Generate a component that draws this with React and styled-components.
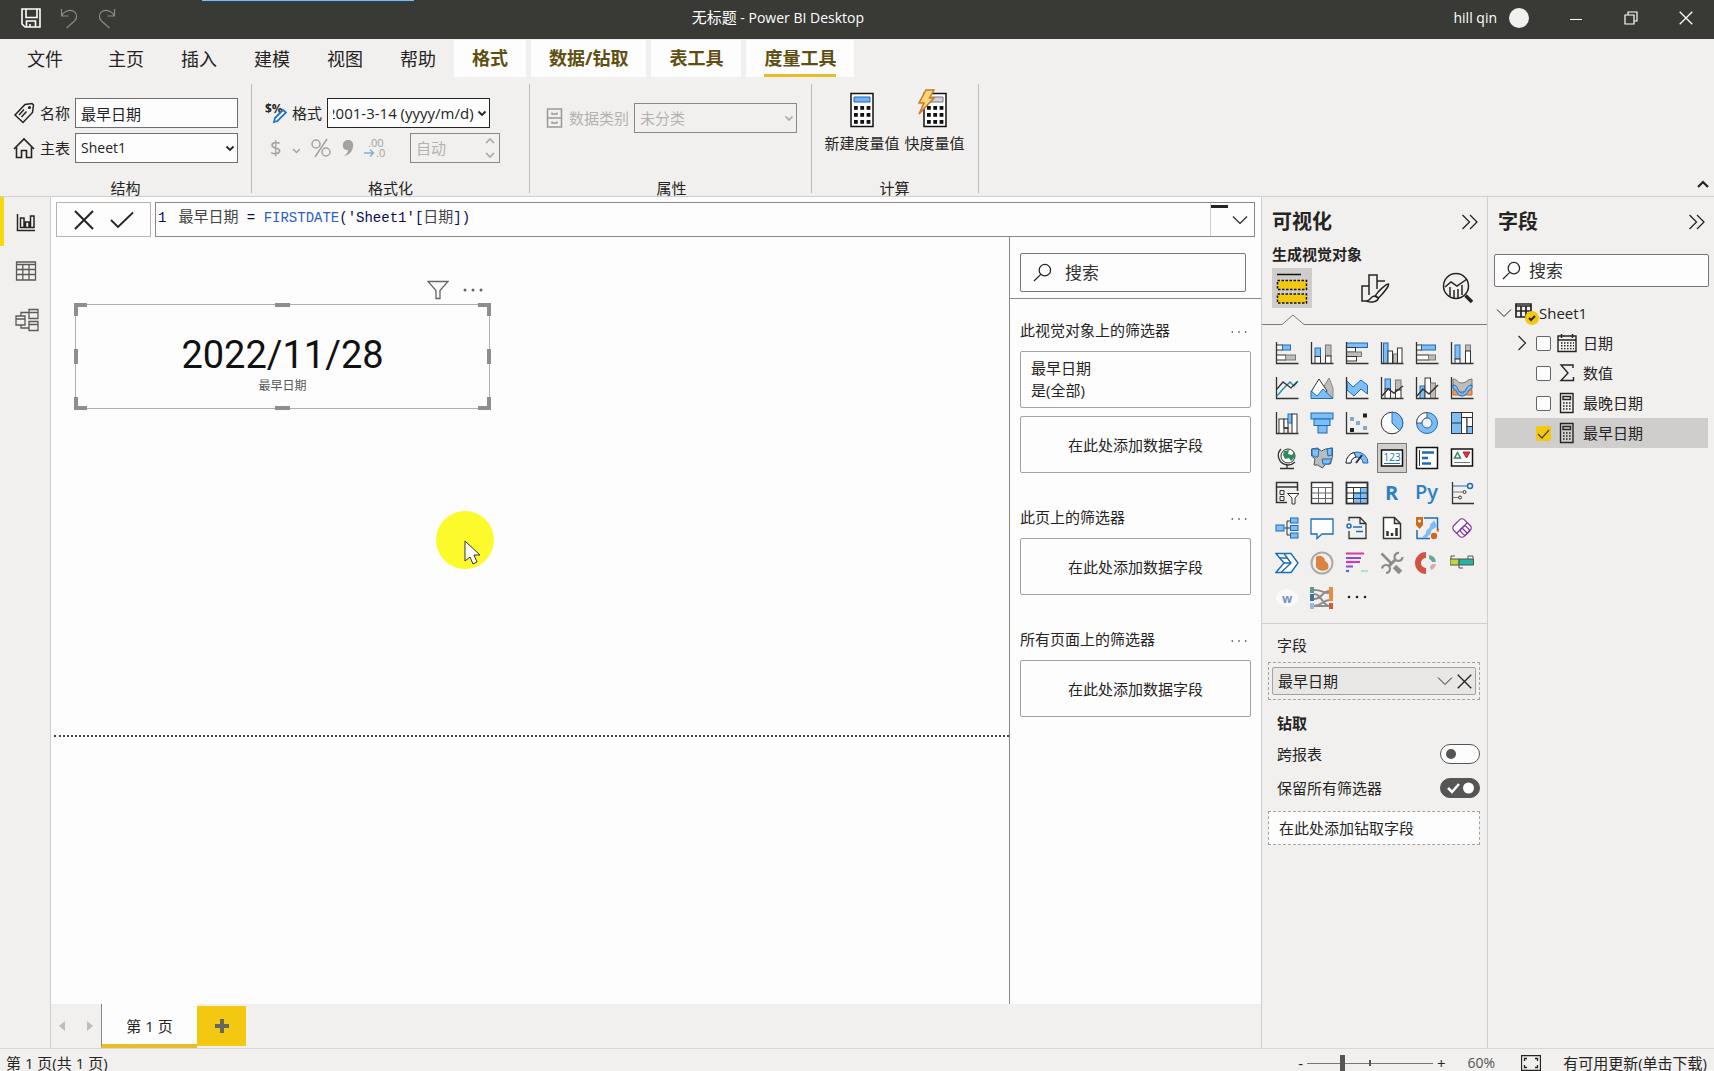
import React, { useState } from "react";
import styled, { createGlobalStyle, css } from "styled-components";

const sans = `"Open Sans", "Noto Sans CJK SC", sans-serif`;
const grey = "#f1f0ee";
const yellow = "#f2c811";

const GlobalStyle = createGlobalStyle`
    * { box-sizing: border-box; }
    body {
        margin: 0;
        overflow: hidden;
        font: 15px/20px ${sans};
        color: #252423;
        background: ${grey};
    }
    button, input, select { font: inherit; color: inherit; margin: 0; }
    button { background: none; border: 0; padding: 0; }
    h2, h3, p { margin: 0; font-size: inherit; }
    svg { display: block; flex: none; }
`;

/* ---------- shell ---------- */

const Shell = styled.div`
    display: flex;
    flex-direction: column;
    height: 100vh;
`;

const TitleBar = styled.header`
    display: grid;
    grid-template-columns: 100fr auto 124fr;
    align-items: center;
    height: 39px;
    flex: none;
    padding: 0 17px 4px 20px;
    background: #393936;
    color: #fff;
    font-size: 14px;
`;

const Title = styled.span`
    b { font-size: 15px; font-weight: 400; }
`;

const ShareStrip = styled.div`
    position: absolute;
    top: 0;
    left: 202px;
    width: 212px;
    height: 1px;
    background: #8fb4d6;
    box-shadow: 0 1px 1px #1c4a78;
`;

const TitleActions = styled.div`
    display: flex;
    align-items: center;
    gap: 16px;
    justify-content: ${({ $end }) => ($end ? "flex-end" : "flex-start")};
`;

const WindowButtons = styled.div`
    display: flex;
    gap: 33px;
    margin-left: 20px;
`;

const IconButton = styled.button`
    display: flex;
    align-items: center;
    justify-content: center;
    min-width: ${({ $tight }) => ($tight ? 0 : 22)}px;
    min-height: 22px;
    color: ${({ $color }) => $color || "inherit"};
`;

const Avatar = styled.span`
    width: 20px;
    height: 20px;
    margin-left: -4px;
    border-radius: 50%;
    background: #f1f0ee;
`;

const Tabs = styled.nav`
    display: flex;
    height: 39px;
    flex: none;
    padding: 1px 9px 0;
    gap: 1px;
    font-size: 18px;
`;

const Tab = styled.button`
    display: flex;
    align-items: center;
    height: 37px;
    padding: 0 18px;
    margin-right: ${({ $file }) => ($file ? "8px" : 0)};
    line-height: 36px;
`;

const ToolTabs = styled.div`
    display: flex;
    gap: 5px;
    margin-left: -1px;
`;

const ToolTab = styled(Tab)`
    background: #fdfdfd;
    color: #5f4f12;
    font-weight: 700;

    span {
        height: 37px;
        border-bottom: 3px solid ${({ $active }) => ($active ? "#e9bd2a" : "transparent")};
    }
`;

/* ---------- ribbon ---------- */

const Ribbon = styled.section`
    display: flex;
    height: 119px;
    flex: none;
    padding: 6px 0 3px;
    border-bottom: 1px solid #d0cfcd;
`;

const Group = styled.div`
    display: flex;
    flex-direction: column;
    justify-content: space-between;
    width: ${({ $width }) => $width}px;
    padding: ${({ $pad }) => $pad};
    border-right: 1px solid #bdbcba;
`;

const GroupTitle = styled.div`
    line-height: 16px;
    text-align: center;
    margin: 0 0 -3px;
`;

const Rows = styled.div`
    display: flex;
    flex-direction: column;
    gap: 5px;
`;

const Row = styled.div`
    display: flex;
    align-items: center;
    height: 30px;
    gap: 5px;
    white-space: nowrap;
    color: ${({ $off }) => ($off ? "#b3b2b0" : "inherit")};
`;

const FormatRow = styled(Row)`
    gap: 10px;
    padding-left: 5px;
    color: #a3a2a0;
`;

const boxed = css`
    width: 163px;
    height: 30px;
    padding: 0 5px;
    border: 1px solid #6f6e6c;
    border-radius: 0;
    background: #fdfdfd;
    outline: none;
`;

const TextBox = styled.input`
    ${boxed}
`;

const Stack = styled.span`
    display: grid;
    align-items: center;

    > * { grid-area: 1 / 1; }
    > svg {
        justify-self: end;
        margin-right: 3px;
        pointer-events: none;
    }
`;

const SpinnerStack = styled(Stack)`
    margin-left: 14px;
`;

const Select = styled.select`
    ${boxed}
    appearance: none;
    font-size: ${({ $latin }) => ($latin ? 14 : 15)}px;
    text-indent: ${({ $scrolled }) => ($scrolled ? "-6px" : 0)};
    border-color: ${({ $scrolled }) => ($scrolled ? "#252423" : "#6f6e6c")};

    &:disabled {
        background: transparent;
        border-color: #8a8988;
        color: #b3b2b0;
        opacity: 1;
    }
`;

const Spinner = styled.input`
    ${boxed}
    width: 90px;
    background: transparent;
    border-color: #8a8988;

    &::placeholder { color: #b3b2b0; opacity: 1; }
`;

const BigButtons = styled.div`
    display: flex;
    justify-content: center;
    gap: 5px;
`;

const BigButton = styled.button`
    display: flex;
    flex-direction: column;
    align-items: center;
    gap: 4px;
`;

const Collapse = styled(IconButton)`
    align-self: flex-end;
    margin: 0 0 -2px auto;
`;

/* ---------- workspace ---------- */

const Workspace = styled.main`
    display: flex;
    flex: 1;
    min-height: 0;
`;

const Rail = styled.nav`
    display: flex;
    flex-direction: column;
    width: 51px;
    border-right: 1px solid #d0cfcd;
`;

const RailButton = styled.button`
    display: flex;
    align-items: center;
    height: 49px;
    padding-left: 11px;
    border-left: 4px solid ${({ $active }) => ($active ? "#f5d90a" : "transparent")};
    color: ${({ $active }) => ($active ? "#252423" : "#5a5958")};
`;

const Center = styled.div`
    display: flex;
    flex-direction: column;
    flex: 1;
    min-width: 0;
    background: #fdfdfd;
`;

const FormulaRow = styled.div`
    display: flex;
    gap: 4px;
    height: 40px;
    flex: none;
    padding: 5px 6px 0 5px;
`;

const FormulaActions = styled.div`
    display: flex;
    align-items: center;
    justify-content: space-evenly;
    width: 95px;
    height: 35px;
    border: 1px solid #b5b4b2;
`;

const Formula = styled.div`
    display: flex;
    flex: 1;
    height: 35px;
    border: 1px solid #8a8988;
    font: 14px/20px "Liberation Mono", "Noto Sans CJK SC", monospace;
    white-space: pre;
    color: #0a0a50;
`;

const Code = styled.code`
    flex: 1;
    padding: 5px 0 0 2px;
    font: inherit;

    i { font-style: normal; font-size: 15px; color: #444; }
    b { font-weight: 400; color: #2b5fc4; }
    em { font-style: normal; margin-right: 12px; }
`;

const Expander = styled.button`
    display: flex;
    align-items: center;
    justify-content: flex-end;
    width: 44px;
    padding-right: 6px;
    border-left: 1px solid #d0cfcd;
    background: linear-gradient(#252423, #252423) 0 2px / 17px 3px no-repeat;
    color: #252423;
`;

const Split = styled.div`
    display: flex;
    flex: 1;
    min-height: 0;
`;

const Canvas = styled.div`
    position: relative;
    flex: 1;
`;

const CardVisual = styled.div`
    position: absolute;
    left: 24px;
    top: 67px;
    width: 415px;
    height: 105px;
    padding-top: 28px;
    border: 1px solid #b0afad;
    text-align: center;
`;

const CardValue = styled.div`
    font: 400 38px/44px Roboto, sans-serif;
    color: #111;
`;

const CardLabel = styled.div`
    font-size: 12px;
    line-height: 18px;
    color: #555;
`;

const Handles = styled.svg`
    position: absolute;
    left: -2px;
    top: -2px;
`;

const VisualTools = styled.div`
    position: absolute;
    left: 376px;
    top: 42px;
    display: flex;
    gap: 13px;
    color: #666;
`;

const PageEdge = styled.div`
    position: absolute;
    left: 3px;
    right: 0;
    top: 498px;
    border-top: 2px dotted #444;
`;

const Pointer = styled.svg`
    position: absolute;
    left: 384px;
    top: 273px;
`;

const FilterPane = styled.aside`
    width: 252px;
    border-left: 1px solid #8a8988;
`;

const SearchBox = styled.label`
    display: flex;
    align-items: center;
    gap: ${({ $small }) => ($small ? 8 : 13)}px;
    height: ${({ $small }) => ($small ? 33 : 39)}px;
    margin: ${({ $small }) => ($small ? "9px 5px 0 6px" : "16px 15px 6px 10px")};
    padding: 0 8px 0 ${({ $small }) => ($small ? 7 : 12)}px;
    border: 1px solid #767573;
    border-radius: 2px;
    background: #fdfdfd;

    input {
        flex: 1;
        min-width: 0;
        border: 0;
        padding: 0;
        background: none;
        font-size: 17px;
        outline: none;
    }
    input::placeholder { color: #333; opacity: 1; }
`;

const FilterSection = styled.section`
    padding: 0 10px;
    margin-bottom: 33px;

    &:first-of-type {
        padding-top: 20px;
        border-top: 1px solid #8a8988;
    }
`;

const FilterHead = styled.div`
    display: flex;
    justify-content: space-between;
    align-items: center;
    height: 22px;
    margin-bottom: 10px;
    padding-right: 4px;

    h3 { font-weight: 400; }
    button { padding-top: 4px; }
`;

const FilterCard = styled.div`
    height: 57px;
    padding: 5px 10px;
    margin-bottom: 8px;
    border: 1px solid #a3a2a0;
    border-radius: 2px;
    line-height: 22px;
`;

const DropCard = styled(FilterCard)`
    margin-bottom: 0;
    line-height: 46px;
    text-align: center;
`;

const PageTabs = styled.footer`
    display: flex;
    height: 44px;
    flex: none;
    background: ${grey};
`;

const PageArrows = styled.div`
    display: flex;
    align-items: center;
    justify-content: space-between;
    width: 50px;
    padding: 0 7px;
    color: #bdbcba;
`;

const PageTab = styled.button`
    width: 96px;
    padding-top: 3px;
    border-left: 1px solid #8a8988;
    border-bottom: 4px solid #e9bd2a;
    background: #fdfdfd;
`;

const AddPage = styled.button`
    display: flex;
    align-items: center;
    justify-content: center;
    width: 49px;
    height: 40px;
    margin-top: 2px;
    background: ${yellow};
    color: #66655f;
`;

/* ---------- visualizations ---------- */

const Pane = styled.aside`
    display: flex;
    flex-direction: column;
    width: ${({ $width }) => $width}px;
    border-left: 1px solid #d0cfcd;
`;

const PaneTitle = styled.div`
    display: flex;
    align-items: center;
    justify-content: space-between;
    height: 48px;
    padding: 2px 6px 0 10px;
    h2 { font-size: 20px; line-height: 24px; }
`;

const SubTitle = styled.h3`
    padding: 0 10px;
    line-height: 18px;
    margin-bottom: 5px;
`;

const Modes = styled.div`
    display: flex;
    justify-content: space-between;
    padding: 0 9px 0 10px;
`;

const Mode = styled.button`
    display: flex;
    align-items: center;
    justify-content: center;
    width: 40px;
    height: 40px;
    background: ${({ $active }) => ($active ? "#cfcdcc" : "none")};
`;

const Notch = styled.div`
    display: flex;
    height: 11px;
    margin: 6px 0 13px;

    &::before, &::after {
        content: "";
        width: 20px;
        border-bottom: 1px solid #7a7978;
    }
    &::after { flex: 1; }
`;

const Gallery = styled.div`
    display: grid;
    grid-template-columns: repeat(6, 30px);
    grid-auto-rows: 30px;
    gap: 5px;
    padding: 0 10px 10px;
    border-bottom: 1px solid #d0cfcd;
`;

const VisualButton = styled.button`
    display: flex;
    align-items: center;
    justify-content: center;
    border: 1px solid ${({ $active }) => ($active ? "#7a7978" : "transparent")};
    background: ${({ $active }) => ($active ? "#d0cfcd" : "none")};
`;

const Wells = styled.div`
    display: flex;
    flex-direction: column;
    padding: 11px 7px 0 6px;
`;

const WellTitle = styled.h3`
    padding-left: 9px;
    font-weight: ${({ $bold }) => ($bold ? 700 : 400)};
`;

const Well = styled.div`
    margin: ${({ $drop }) => ($drop ? "13px 0 0" : "7px 0 13px")};
    padding: ${({ $drop }) => ($drop ? "6px 10px" : "4px 3px")};
    border: 1px dashed #a3a2a0;
    background: ${({ $drop }) => ($drop ? "#fdfdfd" : "none")};
`;

const Chip = styled.div`
    display: flex;
    align-items: center;
    gap: 4px;
    height: 28px;
    padding: 0 3px 0 5px;
    border: 1px solid #a3a2a0;
    border-radius: 2px;
    background: #e8e7e5;
    span { flex: 1; }
`;

const ToggleRow = styled.label`
    display: flex;
    align-items: center;
    justify-content: space-between;
    height: 20px;
    margin-top: ${({ $first }) => ($first ? 11 : 14)}px;
    padding-left: 9px;
`;

const Switch = styled(Stack)`
    input {
        appearance: none;
        width: 40px;
        height: 20px;
        border: 1px solid #555;
        border-radius: 10px;
        background: #fdfdfd;
    }
    input:checked { background: #555; }
    > svg { margin: 0; }
`;

/* ---------- fields ---------- */

const Tree = styled.ul`
    list-style: none;
    margin: 11px 6px 0 7px;
    padding: 0;
`;

const TreeRow = styled.li`
    display: flex;
    align-items: center;
    height: 30px;
    padding-left: ${({ $root }) => ($root ? 1 : 22)}px;
    background: ${({ $active }) => ($active ? "#cfcecc" : "none")};

    label {
        display: flex;
        align-items: center;
        gap: 6px;
    }
`;

const TreeArrow = styled.span`
    display: flex;
    width: 19px;
    flex: none;
`;

const TickBox = styled(Stack)`
    input {
        appearance: none;
        width: 15px;
        height: 15px;
        border: 1px solid #666;
        border-radius: 2px;
        background: #fdfdfd;
    }
    input:checked { background: ${yellow}; border-color: ${yellow}; }
    > svg { margin: 0 1px 0 0; }
`;

const StatusBar = styled.footer`
    display: flex;
    justify-content: space-between;
    height: 23px;
    flex: none;
    padding: 4px 7px 0 6px;
    border-top: 1px solid #d8d7d5;
    overflow: hidden;
`;

const StatusRight = styled.div`
    display: flex;
    align-items: center;
    height: 20px;
    gap: 4px;
`;

const Percent = styled.span`
    margin: 0 22px 0 18px;
    font-size: 14px;
    color: #555;
`;

const Update = styled.span`
    margin-left: 18px;
`;

const Zoom = styled.input`
    appearance: none;
    width: 126px;
    height: 16px;
    background:
        linear-gradient(#555, #555) 50% 50% / 2px 6px no-repeat,
        linear-gradient(#777, #777) 0 50% / 100% 1px no-repeat;

    &::-webkit-slider-thumb {
        appearance: none;
        width: 5px;
        height: 16px;
        background: #555;
    }
`;

/* ---------- icons ---------- */

const Svg = ({ w = 24, h = w, box, children, ...rest }) => (
    <svg
        width={w}
        height={h}
        viewBox={box || `0 0 ${w} ${h}`}
        fill="none"
        stroke="currentColor"
        aria-hidden="true"
        {...rest}
    >
        {children}
    </svg>
);

const Chevron = ({ w = 16, s = 1 }) => (
    <Svg w={w} h={w / 2 + 2} box="0 0 16 10" strokeWidth={s}><path d="M1 1.5l7 7 7-7" /></Svg>
);
const SmallChevron = () => <Svg w={10} h={8} strokeWidth="1.800"><path d="M1.500 2.500l3.500 3.500L8.500 2.500" /></Svg>;
const DoubleChevron = () => <Svg w={18} h={18} strokeWidth="1.300"><path d="M1.500 2l7 7-7 7M9 2l7 7-7 7" /></Svg>;
const Cross = ({ w = 14, s = 1.3 }) => <Svg w={w} box="0 0 14 14" strokeWidth={s}><path d="M.7.7l12.600 12.600M13.300.7L.7 13.300" /></Svg>;
const Dots = ({ w = 16, r = 1 }) => (
    <Svg w={w} h={6} box={`0 0 ${w} 6`} fill="currentColor" stroke="none">
        <circle cx={r + 0.5} cy="3" r={r} /><circle cx={w / 2} cy="3" r={r} /><circle cx={w - r - 0.5} cy="3" r={r} />
    </Svg>
);
const Magnifier = () => <Svg w={19} box="0 0 20 20" strokeWidth="1.300"><circle cx="12.500" cy="7.500" r="6" /><path d="M8.200 12L1 19" /></Svg>;

const Save = () => (
    <Svg w={22} strokeWidth="1.600"><path d="M2 2h18v18H5l-3-3zM6 2v8.500h11V2M6.500 20v-6h9v6M10 20v-3" /></Svg>
);
const Undo = () => <Svg w={22} strokeWidth="1.200"><path d="M3.500 2v7h7M3.500 9c2-4 7-7 12-5 4 3 4 7 1 10l-8 7" /></Svg>;
const Redo = () => <Svg w={22} strokeWidth="1.200"><path d="M18.500 2v7h-7M18.500 9c-2-4-7-7-12-5-4 3-4 7-1 10l8 7" /></Svg>;

const TagIcon = () => (
    <Svg w={22} strokeWidth="1.500">
        <path d="M2 13L12 2.500l7-1 1.500 1.500-1 7.500L10 20.500zM6 13l5-5.500M8.500 15l5-5.500" />
        <circle cx="16.500" cy="5.500" r=".8" />
    </Svg>
);
const HomeIcon = () => <Svg w={22} strokeWidth="1.600"><path d="M1 12L11 2l10 10M3.500 10v10.500H8.500v-7h5v7h5V10" /></Svg>;
const FormatIcon = () => (
    <Svg w={22} stroke="none">
        <text x="0" y="11" fontSize="12" fontWeight="700" fontFamily="Open Sans" fill="#252423">$%</text>
        <path d="M9 20l1-4L18 8l3 2.500L12.500 19z" fill="#fff" stroke="#1a78c2" strokeWidth="1.800" />
    </Svg>
);
const Drawer = () => (
    <Svg w={18} h={20} strokeWidth="1.500" stroke="#9a9997"><path d="M1.500 1h14v18h-14zM1.500 10h14M6 4.500v1.500h5V4.500M6 13.500V15h5v-1.500" /></Svg>
);
const Comma = () => <Svg w={12} h={18} stroke="none" fill="currentColor"><path d="M6 1c4 0 6 3 5 7-1 5-4 8-9 9 3-2 4-4 4-6C-1 12-1 1 6 1z" /></Svg>;
const Decimals = () => (
    <Svg w={22} h={22} stroke="none" fill="#a3a2a0" fontSize="11" fontFamily="Open Sans">
        <text x="4" y="10">.00</text><text x="12" y="20">.0</text>
        <path d="M0 16h9M6 12.500L9.500 16 6 19.500" fill="none" stroke="#7fb0d8" strokeWidth="1.500" />
    </Svg>
);
const calcKeys = [0, 1, 2].flatMap((r) => [0, 1, 2].map((c) => [c, r]));
const Calculator = ({ quick }) => (
    <Svg w={34} h={40} strokeWidth="1.500">
        <path d="M6 4.500h22v33H6z" fill="#fff" stroke="#111" />
        <path d="M9 8h16v5H9z" fill={quick ? "#ccd3da" : "#6fb3f5"} stroke={quick ? "#777" : "#1f66b0"} strokeWidth="1" />
        {calcKeys.map(([c, r]) => (
            <rect key={`${c}${r}`} x={9 + c * 6.3} y={17 + r * 7} width="3.800" height="3.800" fill="#111" stroke="none" />
        ))}
        {quick && <path d="M8 1h8l-4.500 8H16L1 25l5-11H1z" fill="#fbd676" stroke="#c67a2c" />}
    </Svg>
);

const ReportIcon = () => <Svg w={22} strokeWidth="1.500"><path d="M2.500 3v16.500H20M5.500 16.500V7h3.500v9.500zM10.500 16.500V11H14v5.500zM15.500 16.500V5H19v11.500z" /></Svg>;
const DataIcon = () => <Svg w={22} strokeWidth="1.300"><path d="M1.500 2h19v18h-19zM1.500 4.500h19M1.500 9.500h19M1.500 14.500h19M7.800 4.500V20M14 4.500V20" /></Svg>;
const ModelIcon = () => (
    <Svg w={24} strokeWidth="1.300"><path d="M1 8h9v9H1zM1 11h9M14 1.500h9v9h-9zM14 4.500h9M14 13.500h9v9h-9zM14 16.500h9M6 8V4.500h8M6 17v3h8" /></Svg>
);
const Funnel = () => <Svg w={22} h={20} strokeWidth="1.300"><path d="M1 1.500h20l-8 9v8H9v-8z" /></Svg>;

const BuildIcon = () => (
    <Svg w={34} h={34} stroke="#111" strokeWidth="1.500">
        <path d="M2 3.500h24" />
        <path d="M2.500 9.500h29v9h-29zM2.500 23h29v9h-29z" fill={yellow} strokeDasharray="2.500 1.500" />
    </Svg>
);
const FormatVisualIcon = () => (
    <Svg w={30} strokeWidth="1.500">
        <path d="M8 28H2V13h7M9 22V2h8v14M17 8h8" />
        <path d="M28.500 11c1 2-6 10-10 14l-3-2.500C18 18 26 11 28.500 11zM14.500 23c-4 0-4 5-8 5 4 2 11 1 12-3z" fill={grey} />
    </Svg>
);
const AnalyticsIcon = () => (
    <Svg w={32} strokeWidth="1.500">
        <circle cx="14" cy="14" r="12.500" /><path d="M3 15l6-5 6 4 10-7M8 15v9M12 18v8M16 17v9M20 13v10" />
        <path d="M23.500 23.500L30 30" strokeWidth="3.500" />
    </Svg>
);

const K = "#333";
const B = "#7fbef5";
const D = "#1c6cb5";
const G = "#bebdbb";
const W = "#fff";
const axes = <path d="M1.500 1v21.500H23.500" strokeWidth="1.300" />;
// [x, y, w, h, fill, stroke]
const bars = (list) => list.map(([x, y, w, h, f, s = K], i) => (
    <rect key={i} x={x} y={y} width={w} height={h} fill={f} stroke={s} />
));

const visuals = [
    ["堆积条形图", <>{bars([[1.5, 4, 6, 5, W], [7.5, 4, 8, 5, B, D], [1.5, 14, 9, 5, W], [10.5, 14, 10, 5, G, "#777"]])}{axes}</>],
    ["堆积柱形图", <>{bars([[5, 7, 5.5, 8.5, B, D], [5, 15.5, 5.5, 7, W], [15.5, 4, 5.5, 11, G, "#777"], [15.5, 15, 5.5, 7.5, W]])}{axes}</>],
    ["簇状条形图", <>{bars([[1.5, 2, 21, 4.5, B, D], [1.5, 6.5, 9, 4.5, W], [1.5, 11, 15, 4.5, G, "#777"], [1.5, 15.5, 10, 4.5, W]])}{axes}</>],
    ["簇状柱形图", <>{bars([[3.5, 2, 4.5, 20.5, B, D], [8, 10, 4.5, 12.5, W], [13.5, 13, 4, 9.5, G, "#777"], [17.5, 7, 4.5, 15.5, W]])}{axes}</>],
    ["百分比堆积条形图", <>{bars([[1.5, 4, 5, 5, W], [6.5, 4, 14, 5, B, D], [1.5, 14, 12, 5, W], [13.5, 14, 7, 5, G, "#777"]])}{axes}</>],
    ["百分比堆积柱形图", <>{bars([[5, 4, 5, 14, B, D], [5, 18, 5, 4.5, W], [15.5, 4, 5, 6, G, "#777"], [15.5, 10, 5, 12.5, W]])}{axes}</>],
    ["折线图", <>{axes}<path d="M2 20l6-7 7-7 4 4 4-5" stroke="#2a8fae" strokeWidth="1.500" /><path d="M2 13l6-7 8 6 6-6" strokeWidth="1.300" /></>],
    ["分区图", <><path d="M13 12l6-10 4 10v10H13z" fill={G} stroke="#888" /><path d="M1.500 15L9 3l8 12-4 6H5z" fill={W} /><path d="M1 15l6 5 6-7 10 9.500H1z" fill={B} stroke={D} /></>],
    ["堆积面积图", <><path d="M2 5l6 6 8-7 6.500 5v9l-6.500-5-7 7-7-6z" fill={B} stroke={D} />{axes}</>],
    ["折线和堆积柱形图", <>{bars([[5, 3, 5.5, 10, B, D], [5, 13, 5.5, 9.5, W], [15.5, 4, 5.5, 10, G, "#777"], [15.5, 14, 5.5, 8.5, W]])}{axes}<path d="M2 20l6-7 6 4 9-7" strokeWidth="1.500" /></>],
    ["折线和簇状柱形图", <>{bars([[5, 10, 5, 12.5, B, D], [10, 2, 5.5, 20.5, W], [15.5, 7, 5, 15.5, G, "#777"]])}{axes}<path d="M2 20l6-7 6 5 9-9" strokeWidth="1.500" /></>],
    ["功能区图表", <><path d="M3 3c5 0 4 4 9 4s5-4 10-4v8c-5 0-5 5-10 5s-4-5-9-5z" fill={G} stroke="#777" /><path d="M3 14h5l4 5 4-5h6v5H3z" fill="#f09a55" stroke="#c76a2b" /><path d="M3 9c6 0 4 8 9 8s3-8 10-8v4c-5 0-4 7-10 7s-4-7-9-7z" fill={B} stroke={D} />{axes}</>],
    ["瀑布图", <>{bars([[4, 8, 5, 14.5, W], [9, 8, 4, 9, W], [13, 3, 4, 9, B, D], [17, 3, 5, 19.5, W]])}<path d="M9 17h4v5.500M1.500 1v21.500H23.500" strokeWidth="1.300" /></>],
    ["漏斗图", <>{bars([[1, 2, 22, 6, B, D], [4, 8, 16, 6.5, B, D], [8, 14.5, 9, 7.5, B, D]])}</>],
    ["散点图", <>{axes}<g stroke="none" fill="#86a9c8"><path d="M5 6h4v4H5zM11 10h4v4h-4zM18 15h4v4h-4z" /><path d="M18 2.500h4v4h-4zM5 17h4v4H5z" fill="#222" /></g></>],
    ["饼图", <><circle cx="12" cy="12" r="10.800" fill={W} /><path d="M12 1.200V12l7.600 7.600A10.800 10.800 0 0 0 12 1.200z" fill={B} stroke={D} /></>],
    ["圆环图", <><circle cx="12" cy="12" r="10.500" fill={B} stroke={D} /><path d="M12 1.500A10.500 10.500 0 0 0 1.500 12H7a5 5 0 0 1 5-5z" fill={W} stroke="#555" /><circle cx="12" cy="12" r="5" fill={grey} stroke={D} /></>],
    ["树状图", <>{bars([[1.5, 1.5, 10, 21, B], [11.5, 1.5, 11, 5, W], [11.5, 6.5, 5.5, 16, W], [17, 6.5, 5.5, 9, W], [17, 15.5, 5.5, 7, B]])}<path d="M1.500 12h10" /></>],
    ["地图", <><circle cx="13" cy="10" r="7" fill={W} /><path d="M9 5l5-1-1 4 4 1 2-3 1 5-4 4-2-3-4 1-2-4z" fill="#2e8b57" stroke="none" /><path d="M6 3C1 8 3 18 13 19c3 0 5-1 7-3M12 19v3.500M5 22.500h14" strokeWidth="1.300" /></>],
    ["着色地图", <><path d="M1.500 3l6-1 4 3 4-2 7-1v8l-2 8h-5l-3 4-5-3H4l1-6-3.500-3z" fill={G} stroke="#555" /><path d="M2 3l7 0-1 8H5L2 9zM12 13h10l-3 5h-6zM17 3l5-1v7l-4 1z" fill={B} stroke={D} /></>],
    ["仪表", <><path d="M1 17a11 11 0 0 1 22 0h-5a6 6 0 0 0-12 0z" fill={B} stroke={D} /><path d="M1 17A11 11 0 0 1 9 6.500l2 4.700A6 6 0 0 0 6 17z" fill={W} /><path d="M11 17l6-8" strokeWidth="2" /></>],
    ["卡片", <><rect x="1.500" y="4" width="21" height="16" fill={W} stroke="#111" strokeWidth="1.500" /><path d="M4 17.500h16" stroke={D} /><text x="3.500" y="14.500" fontSize="10" fontFamily="Open Sans" fill={D} stroke="none">123</text></>],
    ["多行卡", <><rect x="1.500" y="1.500" width="21" height="21" fill={W} stroke="#111" strokeWidth="1.500" /><path d="M4.500 4v16" /><path d="M7 6.500h12M7 12h6M7 17.500h9" stroke={D} strokeWidth="2.500" /></>],
    ["KPI", <><rect x="1.500" y="3" width="21" height="17" fill={W} stroke="#111" strokeWidth="1.500" /><path d="M4.500 12L7.500 6.500l3 5.500z" stroke="#2e8b57" strokeWidth="1.500" /><path d="M13 6h7l-3.500 6z" fill="#e0353f" stroke="#b22" /><path d="M4 16.500h16" stroke="#777" /></>],
    ["切片器", <><path d="M12 21.500H1.500v-20h21V10M1.500 6h21" strokeWidth="1.500" /><path d="M5 9.500h4v4H5zM5 15.500h4v4H5z" /><path d="M12.500 12.500H24l-4 4.500v6h-3v-6z" fill={W} /></>],
    ["表", <><rect x="1.500" y="1.500" width="21" height="21" fill={W} strokeWidth="1.500" /><path d="M1.500 6.500h21M1.500 12h21M1.500 17.500h21M8.500 6.500v16M15.500 6.500v16" stroke="#666" /></>],
    ["矩阵", <><rect x="1.500" y="1.500" width="21" height="21" fill={W} strokeWidth="1.500" />{bars([[15.5, 6.5, 7, 16, B, D], [8.5, 12, 7, 10.5, B, D]])}<path d="M1.500 6.500h21M1.500 12h21M1.500 17.500h21M8.500 6.500v16" /><path d="M1.500 1.500h21v21h-21z" strokeWidth="1.500" /></>],
    ["R 脚本", <text x="5" y="19" fontSize="20" fontWeight="700" fontFamily="Open Sans" fill="#2b80c9" stroke="none">R</text>],
    ["Python 脚本", <text x="0" y="18" fontSize="20" fontWeight="600" fontFamily="Open Sans" fill="#2b80c9" stroke="none">Py</text>],
    ["关键影响者", <><path d="M2.500 1v21.500H24" strokeWidth="1.300" /><path d="M2.500 5h15" stroke={D} /><path d="M2.500 11h10M2.500 16.500h6" stroke="#777" /><circle cx="20" cy="5" r="2.500" stroke={D} strokeWidth="1.500" /><circle cx="14.500" cy="11" r="1.500" /><circle cx="10" cy="16.500" r="1.500" /></>],
    ["分解树", <><path d="M9 12h6M12 5v14M12 5h4M12 19h4" />{bars([[1, 9, 8, 6, B, D], [15.5, 2, 7.5, 5, B, D], [15.5, 9.5, 7.5, 5, B, D], [15.5, 17, 7.5, 5, B, D]])}</>],
    ["问答", <path d="M1 3h22v15H12l-5 4.500V18H1z" fill={W} stroke={D} strokeWidth="1.300" />],
    ["智能叙述", <><path d="M4 5V1.500h11l6 6v15H4V15M15 1.500v6h6" strokeWidth="1.300" /><circle cx="4" cy="10" r="2" stroke={D} strokeWidth="1.500" /><path d="M8 11h9M11 15.500h7" stroke={D} strokeWidth="1.500" /></>],
    ["分页报表", <><path d="M3.500 1.500h11l6 6v15h-17zM14.500 1.500v6h6" fill={W} strokeWidth="1.500" /><path d="M7.500 15v5M12 17v3M16.500 12v8" strokeWidth="2.500" /></>],
    ["ArcGIS", <><path d="M9 2h13.500v11M2 14v8.500h13" stroke={D} strokeWidth="1.500" /><path d="M19 4c-1 3-4 3-4 6s-4 3-4 6-3 3-4 6h5c1-3 4-3 4-6s4-3 6-6z" fill={B} stroke="none" /><path d="M1 1h7v8l-3.500 4L1 9z" fill="#cd6a1d" stroke="none" /><circle cx="4.500" cy="5" r="1.500" fill={W} stroke="none" /><circle cx="19" cy="20" r="3.200" fill="#cd6a1d" stroke="none" /><circle cx="23" cy="14" r="1.500" fill="#cd6a1d" stroke="none" /></>],
    ["Power Apps", <g stroke="#86379b" strokeWidth="1.300" transform="rotate(45 12 12)"><rect x="4.500" y="4.500" width="15" height="15" rx="3.500" fill={W} /><path d="M12 4.500v15M12 12h7.500" /><rect x="12" y="8" width="7.500" height="7.500" rx="2" /></g>],
    ["Power Automate", <g stroke={D} strokeWidth="1.400"><path d="M1 2.500h15L23 12l-7 9.500H1L9 12z" fill={W} /><path d="M9 2.500L16 12 6 21.500M4.500 7h8M9 12h7" /></g>],
    ["自定义 1", <><circle cx="12" cy="12" r="10.500" stroke="#aaa" strokeWidth="2" /><path d="M6 6c4-3 9 0 9 4 4 2 4 6 3 8-4 3-10 2-12-2z" fill="#db8342" stroke="none" /></>],
    ["甘特图", <g strokeWidth="2.200"><path d="M1 2.500h18M7 11h8" stroke="#e0359a" /><path d="M1 7h15M1 15.500h7" stroke="#8a4bd0" /><path d="M1 11h11" stroke="#d03bb0" /><path d="M1 20h3" stroke="#4d6be0" /><path d="M16 20h7" stroke="#b7dcdc" /></g>],
    ["工具", <g stroke="#8d8c8a"><path d="M1.500 2.500L12 13" strokeWidth="2.500" /><path d="M14.500 15.500l6 6" strokeWidth="5" /><path d="M8.500 15.500l7-7" strokeWidth="3" /><path d="M19 2a4 4 0 1 0 3.500 4M2 17.500A4 4 0 1 1 6 22" strokeWidth="2.200" /></g>],
    ["旭日图", <g stroke="none"><path d="M11 1v6a5 5 0 0 0 0 10v6A11 11 0 0 1 11 1z" fill="#cf5444" /><path d="M14 4a8 8 0 0 1 7 7h-4a4 4 0 0 0-3-3z" fill="#6ca897" /><path d="M17 13h4a8 8 0 0 1-5 6l-1-3z" fill="#d9a7ac" /></g>],
    ["时间轴", <><path d="M0 8h9v6H0z" fill="#c3d63a" stroke="#555" /><path d="M9 8h14.500v6H9z" fill="#27b3a4" stroke="#555" /><path d="M1 8V5h4M18 8V5h5v3M9 14v3h4" stroke="#555" /></>],
    ["词云", <><ellipse cx="12" cy="12" rx="11" ry="9" fill="#f9f9fa" stroke="none" /><text x="7" y="17" fontSize="12" fontWeight="700" fontFamily="Open Sans" fill="#7d8fc0" stroke="none">w</text></>],
    ["桑基图", <><path d="M4 4c9 0 8 3 16 3M4 13C12 13 12 5 20 5M4 8c8 0 8 12 16 12M4 20c8 0 8-6 16-6M4 20h16" stroke="#8d8c8a" strokeWidth="2" /><path d="M0 1h4v6H0z" fill="#5c9b84" stroke="none" /><path d="M0 8h4v7H0z" fill="#3b6fa8" stroke="none" /><path d="M0 17h4v6H0z" fill="#9cb6dd" stroke="none" /><path d="M19 1h4v14h-4z" fill="#e88c3d" stroke="none" /><path d="M19 17h4v6h-4z" fill="#cb5a40" stroke="none" /></>],
    ["获取更多视觉对象", <g fill="#222" stroke="none"><circle cx="4" cy="11" r="1.300" /><circle cx="12" cy="11" r="1.300" /><circle cx="20" cy="11" r="1.300" /></g>],
];

const TableChecked = () => (
    <Svg w={24} h={24} strokeWidth="1.700">
        <path d="M1 3h15v13H1zM1 5h15M1 10h15M6 5v11M11 5v11" />
        <circle cx="17" cy="17" r="7" fill={yellow} stroke="none" />
        <path d="M14 17l2 2 4-4" strokeWidth="2" />
    </Svg>
);
const Calendar = () => (
    <Svg w={20} strokeWidth="1.400">
        <path d="M1 3h18v15.500H1zM1 7h18M4.500 1v4M15.500 1v4" /><path d="M4 10h13M4 12.800h13M4 15.600h13" strokeDasharray="1.500 1.500" />
    </Svg>
);
const Sigma = () => <Svg w={20} strokeWidth="1.400"><path d="M16 5V2H4l7 8-7 7.500h12.500V14" /></Svg>;
const Measure = () => (
    <Svg w={20} h={22} strokeWidth="1.400">
        <path d="M3.500 1.500h12.500v19H3.500zM6 4.500h7.500v3H6z" /><path d="M6 11h8M6 14h8M6 17h8" strokeDasharray="1.600 1.400" />
    </Svg>
);

const fields = [
    { name: "日期", icon: <Calendar />, expandable: true },
    { name: "数值", icon: <Sigma /> },
    { name: "最晚日期", icon: <Measure /> },
    { name: "最早日期", icon: <Measure />, checked: true },
];

/* ---------- parts ---------- */

const Toggle = ({ label, first, on }) => {
    const [checked, setChecked] = useState(on);

    return (
        <ToggleRow $first={first}>
            {label}
            <Switch>
                <input type="checkbox" checked={checked} onChange={() => setChecked(!checked)} />
                <Svg w={40} h={20}>
                    {checked ? (
                        <>
                            <circle cx="28.500" cy="10" r="5.500" fill="#fff" stroke="none" />
                            <path d="M8 10l4 4 7-8" stroke="#fff" strokeWidth="2.500" />
                        </>
                    ) : <circle cx="11" cy="10" r="5" fill="#555" stroke="none" />}
                </Svg>
            </Switch>
        </ToggleRow>
    );
};

const Field = ({ name, icon, expandable, checked: initial = false }) => {
    const [checked, setChecked] = useState(initial);

    return (
        <TreeRow $active={checked}>
            <TreeArrow>
                {expandable && <Svg w={10} h={16} strokeWidth="1.200"><path d="M1.500 1l7 7-7 7" /></Svg>}
            </TreeArrow>
            <label>
                <TickBox>
                    <input type="checkbox" checked={checked} onChange={() => setChecked(!checked)} />
                    {checked && <Svg w={13}><path d="M1 7l4 4 7-8" stroke="#444" strokeWidth="1.200" /></Svg>}
                </TickBox>
                {icon}
                {name}
            </label>
        </TreeRow>
    );
};

const FilterGroup = ({ title, children }) => (
    <FilterSection>
        <FilterHead>
            <h3>{title}</h3>
            <button aria-label="更多选项"><Dots w={16} r={0.8} /></button>
        </FilterHead>
        {children}
        <DropCard>在此处添加数据字段</DropCard>
    </FilterSection>
);

const Header = () => (
    <TitleBar>
        <ShareStrip />
        <TitleActions>
            <IconButton aria-label="保存"><Save /></IconButton>
            <IconButton aria-label="撤消" $color="#8a8988"><Undo /></IconButton>
            <IconButton aria-label="恢复" $color="#8a8988"><Redo /></IconButton>
        </TitleActions>
        <Title><b>无标题</b> - Power BI Desktop</Title>
        <TitleActions $end>
            <span>hill qin</span>
            <Avatar />
            <WindowButtons>
                <IconButton aria-label="最小化"><Svg w={14}><path d="M1 8.500h12" /></Svg></IconButton>
                <IconButton aria-label="还原"><Svg w={14} strokeWidth="1.200"><path d="M1 4h9v9H1zM4 4V1h9v9h-3" /></Svg></IconButton>
                <IconButton aria-label="关闭"><Cross w={14} /></IconButton>
            </WindowButtons>
        </TitleActions>
    </TitleBar>
);

const RibbonBar = () => (
    <Ribbon>
        <Group $width={252} $pad="14px 13px 0 13px">
            <Rows>
                <Row>
                    <TagIcon />
                    <label htmlFor="name">名称</label>
                    <TextBox id="name" defaultValue="最早日期" />
                </Row>
                <Row>
                    <HomeIcon />
                    <label htmlFor="home">主表</label>
                    <Stack>
                        <Select id="home" $latin><option>Sheet1</option></Select>
                        <SmallChevron />
                    </Stack>
                </Row>
            </Rows>
            <GroupTitle>结构</GroupTitle>
        </Group>
        <Group $width={278} $pad="14px 13px 0 13px">
            <Rows>
                <Row>
                    <FormatIcon />
                    <label htmlFor="format">格式</label>
                    <Stack>
                        <Select id="format" $scrolled><option>2001-3-14 (yyyy/m/d)</option></Select>
                        <SmallChevron />
                    </Stack>
                </Row>
                <FormatRow>
                    <IconButton aria-label="货币">
                        <Svg w={30} h={24} stroke="none" fill="currentColor">
                            <text x="0" y="19" fontSize="20" fontFamily="Open Sans">$</text>
                            <path d="M23 13l3.500 3.500L30 13" fill="none" stroke="currentColor" strokeWidth="1.500" />
                        </Svg>
                    </IconButton>
                    <IconButton aria-label="百分比">
                        <Svg w={22} strokeWidth="1.500"><circle cx="6" cy="7" r="4" /><circle cx="16" cy="15" r="4" /><path d="M17 2L5 20" /></Svg>
                    </IconButton>
                    <IconButton $tight aria-label="千位分隔符"><Comma /></IconButton>
                    <IconButton aria-label="小数位"><Decimals /></IconButton>
                    <SpinnerStack>
                        <Spinner aria-label="小数位数" placeholder="自动" disabled />
                        <Svg w={14} h={24} strokeWidth="1.500"><path d="M3 7l4-4 4 4M3 17l4 4 4-4" /></Svg>
                    </SpinnerStack>
                </FormatRow>
            </Rows>
            <GroupTitle>格式化</GroupTitle>
        </Group>
        <Group $width={282} $pad="19px 14px 0 16px">
            <Row $off>
                <Drawer />
                <label htmlFor="category">数据类别</label>
                <Stack>
                    <Select id="category" disabled><option>未分类</option></Select>
                    <SmallChevron />
                </Stack>
            </Row>
            <GroupTitle>属性</GroupTitle>
        </Group>
        <Group $width={167} $pad="5px 1px 0 0">
            <BigButtons>
                <BigButton><Calculator />新建度量值</BigButton>
                <BigButton><Calculator quick />快度量值</BigButton>
            </BigButtons>
            <GroupTitle>计算</GroupTitle>
        </Group>
        <Collapse aria-label="折叠功能区">
            <Svg w={12} h={9} strokeWidth="2.200"><path d="M1 7l5-5 5 5" /></Svg>
        </Collapse>
    </Ribbon>
);

const ReportCanvas = () => (
    <Canvas>
        <VisualTools>
            <IconButton aria-label="筛选器"><Funnel /></IconButton>
            <IconButton aria-label="更多选项"><Dots w={20} r={1.5} /></IconButton>
        </VisualTools>
        <CardVisual>
            <Handles width="417" height="107" fill="none" stroke="#8f8e8c" strokeWidth="4">
                <path d="M2 13V2h11M404 2h11v11M415 94v11h-11M13 105H2V94M201 2h15M201 105h15M2 46v15M415 46v15" />
            </Handles>
            <CardValue>2022/11/28</CardValue>
            <CardLabel>最早日期</CardLabel>
        </CardVisual>
        <Pointer width="60" height="60" aria-hidden="true">
            <circle cx="30" cy="30" r="29" fill="#fdfa2b" />
            <path d="M30 31v20l5-4 3 7 4-2-3-7h6z" fill="#fff" stroke="#333" />
        </Pointer>
        <PageEdge />
    </Canvas>
);

const Filters = () => (
    <FilterPane>
        <SearchBox>
            <Magnifier />
            <input type="text" placeholder="搜索" aria-label="搜索筛选器" />
        </SearchBox>
        <FilterGroup title="此视觉对象上的筛选器">
            <FilterCard>
                <p>最早日期</p>
                <p>是(全部)</p>
            </FilterCard>
        </FilterGroup>
        <FilterGroup title="此页上的筛选器" />
        <FilterGroup title="所有页面上的筛选器" />
    </FilterPane>
);

const Visualizations = () => (
    <Pane $width={226}>
        <PaneTitle>
            <h2>可视化</h2>
            <IconButton aria-label="折叠"><DoubleChevron /></IconButton>
        </PaneTitle>
        <SubTitle>生成视觉对象</SubTitle>
        <Modes>
            <Mode $active aria-label="生成视觉对象"><BuildIcon /></Mode>
            <Mode aria-label="设置视觉对象格式"><FormatVisualIcon /></Mode>
            <Mode aria-label="分析"><AnalyticsIcon /></Mode>
        </Modes>
        <Notch><Svg w={22} h={11}><path d="M0 10.500L11 1l11 9.500" stroke="#7a7978" /></Svg></Notch>
        <Gallery>
            {visuals.map(([name, art]) => (
                <VisualButton key={name} aria-label={name} $active={name === "卡片"}>
                    <Svg w={24} stroke={K}>{art}</Svg>
                </VisualButton>
            ))}
        </Gallery>
        <Wells>
            <WellTitle>字段</WellTitle>
            <Well>
                <Chip>
                    <span>最早日期</span>
                    <Chevron w={16} />
                    <Cross w={15} />
                </Chip>
            </Well>
            <WellTitle $bold>钻取</WellTitle>
            <Toggle label="跨报表" first on={false} />
            <Toggle label="保留所有筛选器" on />
            <Well $drop>在此处添加钻取字段</Well>
        </Wells>
    </Pane>
);

const Fields = () => (
    <Pane $width={227}>
        <PaneTitle>
            <h2>字段</h2>
            <IconButton aria-label="折叠"><DoubleChevron /></IconButton>
        </PaneTitle>
        <SearchBox $small>
            <Magnifier />
            <input type="text" placeholder="搜索" aria-label="搜索字段" />
        </SearchBox>
        <Tree>
            <TreeRow $root>
                <TreeArrow><Chevron w={16} /></TreeArrow>
                <TableChecked />
                Sheet1
            </TreeRow>
            {fields.map((field) => <Field key={field.name} {...field} />)}
        </Tree>
    </Pane>
);

const App = () => (
    <Shell>
        <GlobalStyle />
        <Header />
        <Tabs>
            <Tab $file>文件</Tab>
            {["主页", "插入", "建模", "视图", "帮助"].map((name) => <Tab key={name}>{name}</Tab>)}
            <ToolTabs>
                {["格式", "数据/钻取", "表工具", "度量工具"].map((name) => (
                    <ToolTab key={name} $active={name === "度量工具"}><span>{name}</span></ToolTab>
                ))}
            </ToolTabs>
        </Tabs>
        <RibbonBar />
        <Workspace>
            <Rail>
                <RailButton $active aria-label="报表"><ReportIcon /></RailButton>
                <RailButton aria-label="数据"><DataIcon /></RailButton>
                <RailButton aria-label="模型"><ModelIcon /></RailButton>
            </Rail>
            <Center>
                <FormulaRow>
                    <FormulaActions>
                        <IconButton aria-label="取消"><Cross w={20} s={1.4} /></IconButton>
                        <IconButton aria-label="提交"><Svg w={24} h={18} strokeWidth="1.800"><path d="M1 9l7 7L23 1.500" /></Svg></IconButton>
                    </FormulaActions>
                    <Formula>
                        <Code><em>1</em><i>最早日期</i> = <b>FIRSTDATE</b>('Sheet1'[<i>日期</i>])</Code>
                        <Expander aria-label="展开编辑栏"><Chevron w={16} s={1.2} /></Expander>
                    </Formula>
                </FormulaRow>
                <Split>
                    <ReportCanvas />
                    <Filters />
                </Split>
                <PageTabs>
                    <PageArrows>
                        <Svg w={8} h={12} fill="currentColor" stroke="none"><path d="M7 1v10L1 6z" /></Svg>
                        <Svg w={8} h={12} fill="currentColor" stroke="none"><path d="M1 1v10l6-5z" /></Svg>
                    </PageArrows>
                    <PageTab>第 1 页</PageTab>
                    <AddPage aria-label="新建页">
                        <Svg w={14} strokeWidth="4"><path d="M7 0v14M0 7h14" /></Svg>
                    </AddPage>
                </PageTabs>
            </Center>
            <Visualizations />
            <Fields />
        </Workspace>
        <StatusBar>
            <span>第 1 页(共 1 页)</span>
            <StatusRight>
                <span>-</span>
                <Zoom type="range" aria-label="缩放" min="0" max="100" defaultValue="27" />
                <span>+</span>
                <Percent>60%</Percent>
                <Svg w={20} h={16}>
                    <path d="M.5.5h19v15H.5zM3.500 6V3.500H6M14 3.500h2.500V6M16.500 10v2.500H14M6 12.500H3.500V10" strokeWidth="1.300" />
                </Svg>
                <Update>有可用更新(单击下载)</Update>
            </StatusRight>
        </StatusBar>
    </Shell>
);

export default App;
